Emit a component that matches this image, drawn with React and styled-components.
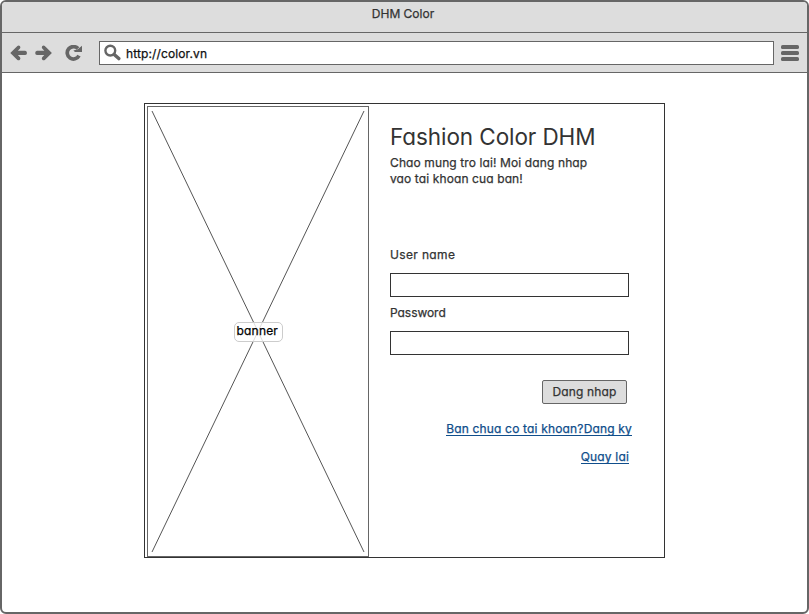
import React from "react";
import styled, { createGlobalStyle } from "styled-components";

const GlobalStyle = createGlobalStyle`
  *, *::before, *::after { box-sizing: border-box; }
  body {
    margin: 0;
    background: #fff;
    color: #333;
    font: 400 12px/16px "Inter", sans-serif;
    font-feature-settings: "cv11";
    -webkit-text-stroke: 0.25px currentColor;
  }
`;

const Browser = styled.div`
  width: 809px;
  height: 614px;
  display: flex;
  flex-direction: column;
  border: 2px solid #666;
  border-radius: 6px;
  background: #fff;
  overflow: hidden;
`;

const TitleBar = styled.header`
  height: 31px;
  flex: none;
  padding: 4px 3px 0 0;
  text-align: center;
  background: #ddd;
  border-bottom: 1px solid #666;
`;

const Toolbar = styled.nav`
  height: 40px;
  flex: none;
  display: flex;
  align-items: center;
  padding: 0 8px 0 8px;
  background: #ddd;
  border-bottom: 1px solid #666;
`;

const Icon = styled.svg`
  display: block;
  flex: none;
  margin-right: ${(p) => p.$gap || 0}px;
`;

const AddressBar = styled.div`
  flex: 1;
  height: 24px;
  display: flex;
  align-items: center;
  padding-left: 4px;
  margin-right: 7px;
  background: #fff;
  border: 1px solid #666;
  color: #111;
  letter-spacing: 0.12px;
`;

const Url = styled.span`
  padding-top: 2px;
`;

const Page = styled.main`
  flex: 1;
  padding: 30px 0 0 142px;
`;

const Card = styled.section`
  width: 521px;
  height: 455px;
  display: flex;
  padding: 2px 0 0 2px;
  border: 1px solid #333;
`;

const Banner = styled.div`
  width: 222px;
  height: 451px;
  display: grid;
  place-items: center;
  border: 1px solid #666;

  > * { grid-area: 1 / 1; }
`;

const BannerLabel = styled.span`
  width: 49px;
  height: 20px;
  padding-left: 2px;
  border: 1px solid #ccc;
  border-radius: 5px;
  background: rgba(255, 255, 255, 0.8);
  color: #000;
  letter-spacing: 0.2px;
  z-index: 1;
`;

const Form = styled.form`
  width: 242px;
  margin-left: 21px;
  display: flex;
  flex-direction: column;
`;

const Heading = styled.h1`
  margin: 16px 0 3px;
  font-size: 22.5px;
  font-weight: 400;
  line-height: 30px;
  letter-spacing: -0.08px;
  white-space: nowrap;
  -webkit-text-stroke: 0;
`;

const Intro = styled.p`
  margin: 0 0 60px;
  letter-spacing: 0.11px;
  white-space: nowrap;
`;

const Label = styled.label`
  height: 16px;
  letter-spacing: ${(p) => p.$tracking}px;
`;

const Field = styled.input`
  width: 239px;
  height: 24px;
  margin: ${(p) => p.$margin};
  border: 1px solid #333;
  border-radius: 0;
  background: #fff;
  outline: none;
`;

const Submit = styled.button`
  align-self: flex-end;
  width: 85px;
  height: 24px;
  margin: 0 5px 16px 0;
  padding: 0 0 1px;
  border: 1px solid #666;
  border-radius: 2px;
  background: #ddd;
  color: #333;
  font: inherit;
  font-feature-settings: inherit;
  letter-spacing: 0.15px;
`;

const Link = styled.a`
  align-self: flex-end;
  height: 16px;
  margin: 0 ${(p) => p.$inset || 0}px 12px 0;
  border-bottom: 1px solid #104e8b;
  color: #104e8b;
  letter-spacing: 0.17px;
  line-height: 18px;
  text-decoration: none;
  white-space: nowrap;
`;

const arrow =
  "M0.3 7.9 7.4 0.9Q8.6 0 9.9 1 10.9 2.3 10 3.5L7.9 5.7H15.2Q17 6 17 7.9T15.2 10.1H7.9L10 12.3Q10.9 13.6 9.9 14.8 8.6 15.8 7.4 14.9Z";

export default function App() {
  return (
    <>
      <GlobalStyle />
      <Browser>
        <TitleBar>DHM Color</TitleBar>
        <Toolbar>
          <Icon $gap={8} width="17" height="16" viewBox="0 0 17 16" fill="#666">
            <path d={arrow} />
          </Icon>
          <Icon $gap={13} width="17" height="16" viewBox="0 0 17 16" fill="#666">
            <path d={arrow} transform="matrix(-1 0 0 1 17.2 0)" />
          </Icon>
          <Icon $gap={17} width="17" height="16" viewBox="0 0 17 16">
            <path d="M13 3.6A6.2 6.2 0 1 0 14 10.6" fill="none" stroke="#666" strokeWidth="3.7" />
            <path d="M17 .8V7H10L8.4 5.6 12.8 4.3Z" fill="#666" />
          </Icon>
          <AddressBar>
            <Icon $gap={5} width="17" height="17" viewBox="0 0 17 17" fill="none" stroke="#666">
              <circle cx="6.3" cy="6.6" r="4.9" strokeWidth="2.4" />
              <path d="m10.2 10.4 4.6 4.2" strokeWidth="3.4" strokeLinecap="round" />
            </Icon>
            <Url>http://color.vn</Url>
          </AddressBar>
          <Icon width="18" height="16" viewBox="0 0 18 16" fill="#666">
            <rect width="18" height="4" rx="1.6" />
            <rect y="6" width="18" height="4" rx="1.6" />
            <rect y="12" width="18" height="4" rx="1.6" />
          </Icon>
        </Toolbar>
        <Page>
          <Card>
            <Banner>
              <Icon width="214" height="443" viewBox="0 0 214 443" stroke="#555">
                <path d="M1 1 213 442M213 1 1 442" />
              </Icon>
              <BannerLabel>banner</BannerLabel>
            </Banner>
            <Form onSubmit={(e) => e.preventDefault()}>
              <Heading>Fashion Color DHM</Heading>
              <Intro>
                Chao mung tro lai! Moi dang nhap
                <br />
                vao tai khoan cua ban!
              </Intro>
              <Label htmlFor="user" $tracking={0.35}>User name</Label>
              <Field id="user" $margin="10px 0 8px" />
              <Label htmlFor="pass" $tracking={-0.05}>Password</Label>
              <Field id="pass" type="password" $margin="10px 0 25px" />
              <Submit>Dang nhap</Submit>
              <Link href="#register">Ban chua co tai khoan?Dang ky</Link>
              <Link href="#back" $inset={3}>Quay lai</Link>
            </Form>
          </Card>
        </Page>
      </Browser>
    </>
  );
}
